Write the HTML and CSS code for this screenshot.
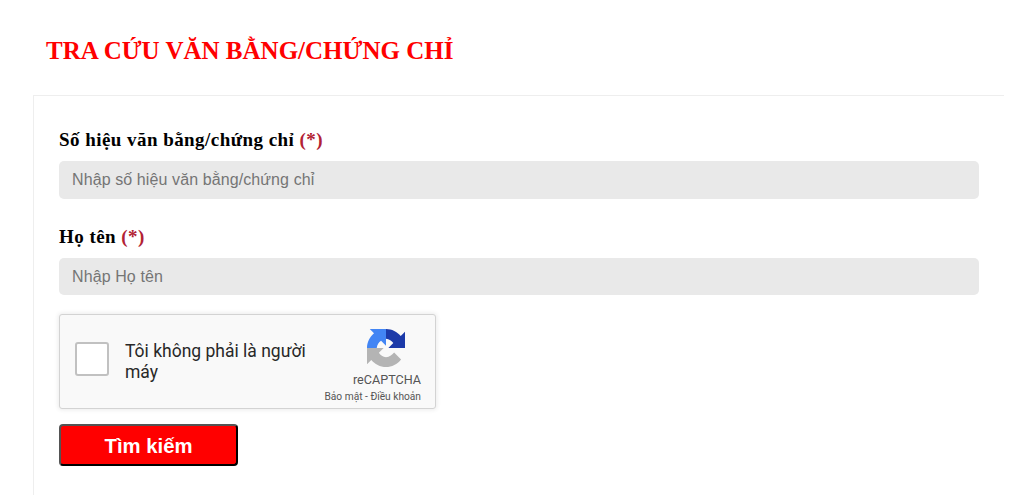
FILE: index.html
```html
<!DOCTYPE html>
<html lang="en">
<head>
  <meta charset="UTF-8" />
  <meta name="viewport" content="width=device-width, initial-scale=1.0" />
  <title>Tra cứu văn bằng/chứng chỉ</title>
  <link rel="stylesheet" href="styles.css">
</head>
<body>

<div class="page">
  <h1 class="title">TRA CỨU VĂN BẰNG/CHỨNG CHỈ</h1>

  <form class="panel">
    <div class="field">
      <label class="label" for="soHieu">Số hiệu văn bằng/chứng chỉ <span class="required">(*)</span></label>
      <input class="input" id="soHieu" type="text" placeholder="Nhập số hiệu văn bằng/chứng chỉ">
    </div>
    <div class="field">
      <label class="label" for="hoTen">Họ tên <span class="required">(*)</span></label>
      <input class="input" id="hoTen" type="text" placeholder="Nhập Họ tên">
    </div>

    <div class="captcha">
      <div class="captcha-check"></div>
      <div class="captcha-text">Tôi không phải là người máy</div>
      <div class="captcha-brand">
        <svg class="captcha-logo" viewBox="0 0 64 64" aria-hidden="true">
          <path fill="#1c3aa9" d="M32 0C42 0 50.9 4.7 56.8 11.8L64 4.7V32H36L44.3 23.7C41.7 19.7 37.4 17 32 16.4Z"/>
          <path fill="#4285f4" transform="rotate(-90 32 32)" d="M32 0C42 0 50.9 4.7 56.8 11.8L64 4.7V32H36L44.3 23.7C41.7 19.7 37.4 17 32 16.4Z"/>
          <path fill="#b4b4b4" d="M0 32V59.3L7.2 52.2C13.1 59.3 22 64 32 64C42 64 51 59.2 57.4 51.3L45.7 39.4C43 43 38 47 32 47.6C27 47 22.5 44 20 40L28 32Z"/>
        </svg>
        <div class="captcha-name">reCAPTCHA</div>
        <div class="captcha-terms">Bảo mật - Điều khoản</div>
      </div>
    </div>

    <button class="btn" type="button">Tìm kiếm</button>
  </form>
</div>

</body>
</html>
```

FILE: styles.css
```css
* { box-sizing: border-box; }
body {
  margin: 0;
  background: #fff;
  color: #000;
  font-family: "Liberation Serif", serif;
}
.page {
  display: flex;
  flex-direction: column;
  height: 495px;
  overflow: hidden;
  padding-left: 33px;
  padding-right: 19px;
}
.title {
  flex: none;
  margin: 0;
  padding: 36px 0 0 13px;
  height: 95px;
  font-size: 25px;
  line-height: 30px;
  font-weight: bold;
  color: #f00;
}
.panel {
  flex: 1;
  border-top: 1px solid #eee;
  border-left: 1px solid #eee;
  padding: 32px 25px 0;
}
.field {
  margin-bottom: 18px;
}
.field + .field {
  margin-top: 26px;
  margin-bottom: 19px;
}
.field + .field .input {
  height: 37px;
}
.label {
  display: block;
  margin-bottom: 10px;
  font-size: 19px;
  line-height: 23px;
  font-weight: bold;
  letter-spacing: 0.45px;
}
.required {
  color: #b22234;
}
.input {
  display: block;
  width: 100%;
  height: 38px;
  padding: 0 13px;
  border: none;
  border-radius: 5px;
  background: #e9e9e9;
  font-family: "Liberation Sans", sans-serif;
  font-size: 16px;
  letter-spacing: 0.1px;
}
.input::placeholder {
  color: #757575;
}
.captcha {
  display: flex;
  align-items: center;
  width: 377px;
  height: 95px;
  padding: 0 14px 0 15px;
  border: 1px solid #d3d3d3;
  border-radius: 3px;
  background: #f9f9f9;
  box-shadow: 0 0 4px 1px rgba(0, 0, 0, 0.08);
  font-family: Roboto, sans-serif;
}
.captcha-check {
  flex: none;
  width: 34px;
  height: 34px;
  margin-bottom: 6px;
  border: 2px solid #c1c1c1;
  border-radius: 3px;
  background: #fff;
}
.captcha-text {
  width: 195px;
  margin-left: 16px;
  font-size: 17.5px;
  line-height: 21px;
  color: #282828;
}
.captcha-brand {
  flex: 1;
  display: flex;
  flex-direction: column;
  align-items: flex-end;
  margin-top: 10px;
  white-space: nowrap;
  color: #555;
}
.captcha-logo {
  width: 38px;
  height: 38px;
  margin-right: 16px;
}
.captcha-name {
  margin-top: 5px;
  font-size: 12.6px;
  line-height: 16px;
}
.captcha-terms {
  margin-top: 2px;
  font-size: 10.2px;
  line-height: 14px;
}
.btn {
  display: block;
  width: 179px;
  height: 42px;
  margin-top: 15px;
  padding: 3px 0 0;
  border: 2px outset #000;
  border-radius: 4px;
  background: #f00;
  color: #fff;
  font-family: "Liberation Sans", sans-serif;
  font-size: 20.3px;
  font-weight: bold;
}
```
